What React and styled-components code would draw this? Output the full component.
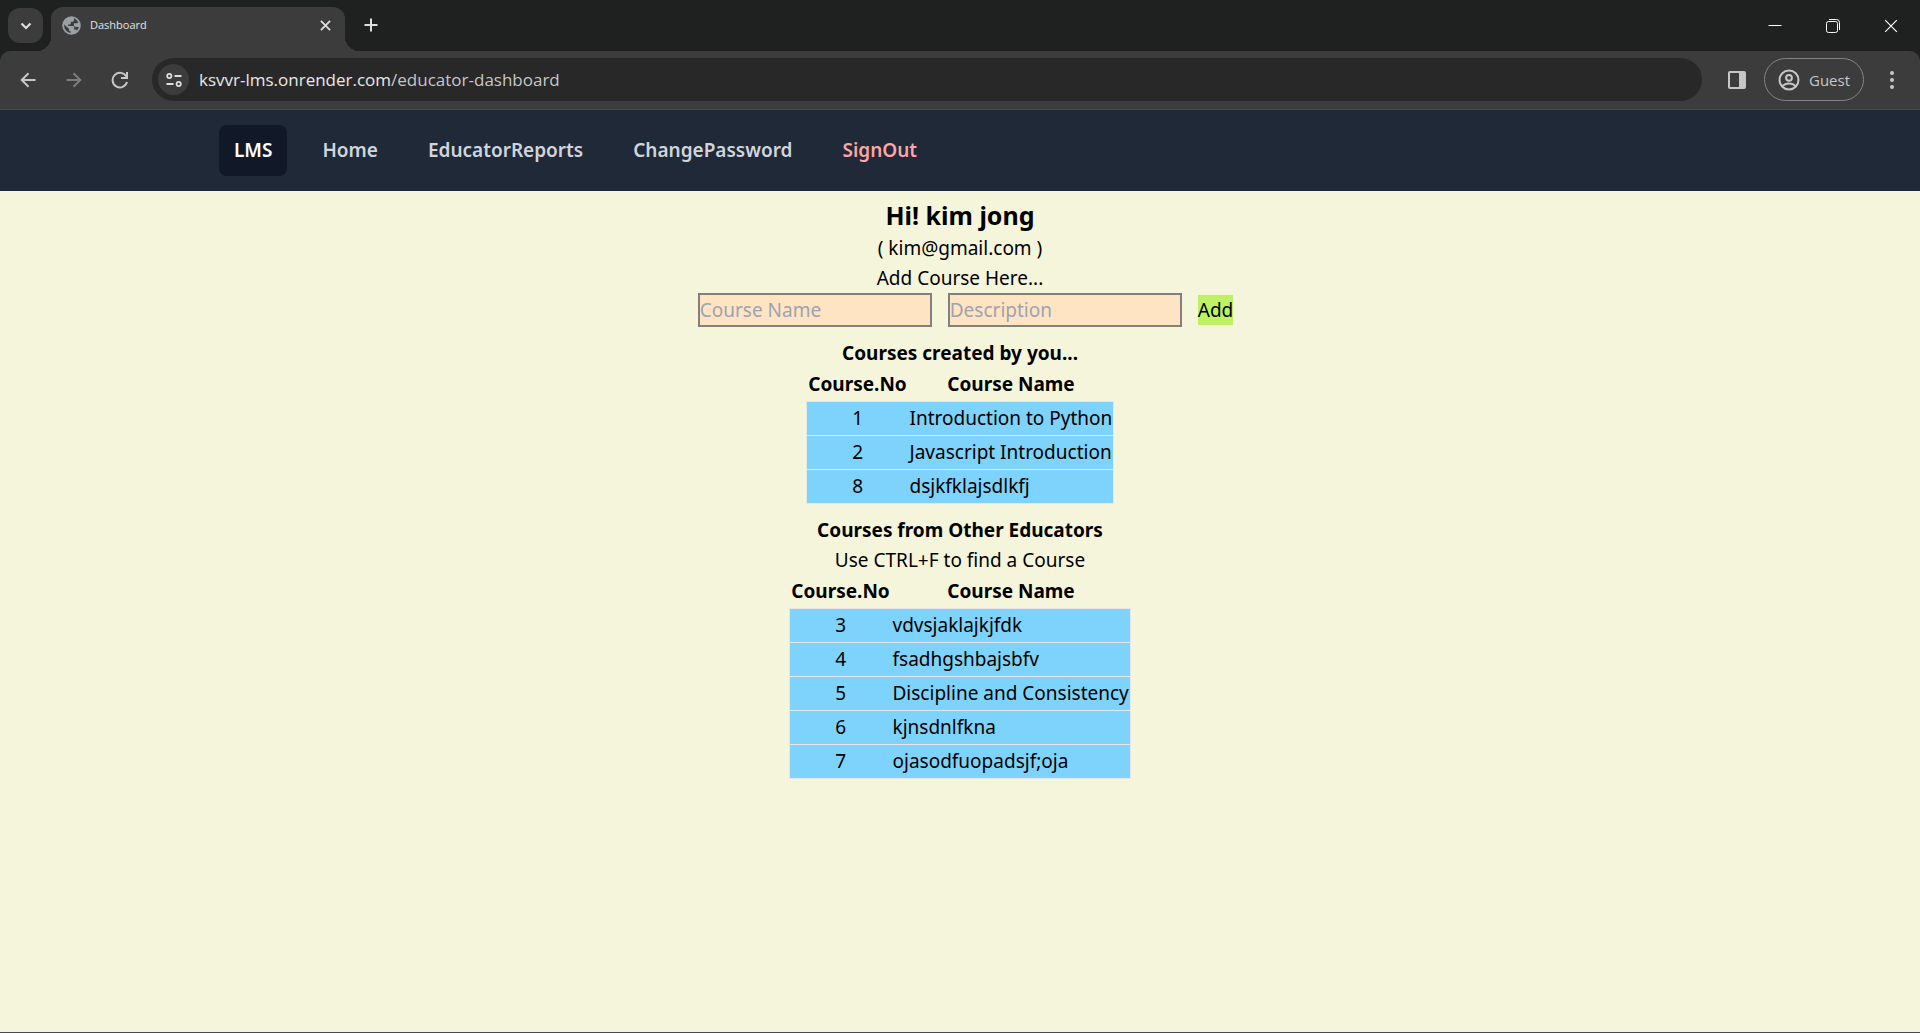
import React from "react";
import styled, { createGlobalStyle } from "styled-components";

const GlobalStyle = createGlobalStyle`
  *, *::before, *::after { box-sizing: border-box; }
  body {
    margin: 0;
    background: #f5f5dc;
    color: #000;
    font-family: "Noto Sans", "Open Sans", sans-serif;
  }
  button, input { font: inherit; color: inherit; }
  h1, h2, p, ul { margin: 0; padding: 0; }
`;

const Window = styled.div`
  display: flex;
  flex-direction: column;
  min-height: 100vh;
  border-bottom: 1px solid #474a56;
`;

/* ---------- Browser frame ---------- */

const BrowserFrame = styled.header`
  font-family: "Open Sans", "Noto Sans", sans-serif;
`;

const TabStrip = styled.div`
  display: flex;
  align-items: flex-end;
  height: 51px;
  padding-left: 8px;
  background: #1f2120;
`;

const BareButton = styled.button`
  display: flex;
  align-items: center;
  justify-content: center;
  padding: 0;
  border: 0;
  background: none;
  color: ${(p) => p.$color || "#dedede"};
`;

const TabSearch = styled(BareButton)`
  width: 35px;
  height: 35px;
  margin-bottom: 8px;
  border-radius: 12px;
  background: #3c3c3c;
`;

const Tab = styled.div`
  position: relative;
  display: flex;
  align-items: center;
  gap: 9px;
  width: 294px;
  height: 44px;
  margin-left: 8px;
  padding: 0 8px 8px 11px;
  border-radius: 12px 12px 0 0;
  background: #3c3c3c;
  color: #e3e3e3;
  font-size: 11px;
  line-height: 16px;

  &::before, &::after {
    content: "";
    position: absolute;
    bottom: 0;
    width: 14px;
    height: 14px;
  }
  &::before {
    left: -14px;
    background: radial-gradient(circle at 0 0, transparent 14px, #3c3c3c 14px);
  }
  &::after {
    right: -14px;
    background: radial-gradient(circle at 100% 0, transparent 14px, #3c3c3c 14px);
  }
`;

const TabTitle = styled.span`flex: 1;`;

const TabClose = styled(BareButton)`
  width: 24px;
  height: 24px;
`;

const NewTab = styled(BareButton)`
  width: 36px;
  height: 36px;
  margin: 0 0 8px 8px;
`;

const WindowControls = styled.div`
  display: flex;
  align-self: stretch;
  margin-left: auto;
`;

const WindowButton = styled(BareButton)`
  width: 58px;
  height: 51px;
`;

const ToolbarBack = styled.div`background: #1f2120;`;

const Toolbar = styled.div`
  display: flex;
  align-items: center;
  height: 59px;
  padding: 0 10px 1px 10px;
  border-bottom: 1px solid #4a4a4a;
  border-radius: 10px 10px 0 0;
  background: #3c3c3c;
`;

const ToolButtons = styled.div`
  display: flex;
  gap: 10px;
  margin-right: 14px;
`;

const ToolButton = styled(BareButton)`
  width: 36px;
  height: 36px;
`;

const AddressBar = styled.div`
  display: flex;
  flex: 1;
  align-items: center;
  gap: 10px;
  height: 43px;
  padding-left: 6px;
  border-radius: 22px;
  background: #282828;
`;

const SiteInfo = styled(BareButton)`
  width: 31px;
  height: 31px;
  border-radius: 50%;
  background: #3c3c3c;
`;

const Address = styled.div`
  flex: 1;
  color: #c7c7c7;
  font-size: 17px;
  line-height: 24px;
  outline: none;
`;

const Host = styled.span`color: #e8e8e8;`;

const ToolbarEnd = styled.div`
  display: flex;
  align-items: center;
  gap: 9px;
  margin-left: 17px;
`;

const GuestButton = styled(BareButton)`
  gap: 9px;
  width: 100px;
  height: 43px;
  border: 1px solid #858585;
  border-radius: 22px;
  font-size: 15px;
  line-height: 20px;
`;

const MenuButton = styled(BareButton)`
  width: 37px;
  height: 36px;
`;

/* ---------- Site ---------- */

const NavBar = styled.nav`
  padding: 15px 20px;
  background: #1f2937;
`;

const NavList = styled.ul`
  display: flex;
  gap: 20px;
  max-width: 1482px;
  margin: 0 auto;
  list-style: none;
`;

const NavLink = styled.a`
  display: block;
  padding: 10px 15px;
  border-radius: 8px;
  background: ${(p) => (p.$active ? "#111827" : "transparent")};
  color: ${(p) => p.$color || "#d1d5db"};
  font-size: 19px;
  font-weight: 600;
  line-height: 31px;
  text-decoration: none;
`;

const Main = styled.main`
  display: flex;
  flex: 1;
  flex-direction: column;
  align-items: center;
  padding-top: 7px;
  background: #f5f5dc;
`;

const Greeting = styled.h1`
  font-size: 25px;
  font-weight: 700;
  line-height: 35px;
`;

const Line = styled.p`
  font-size: 19px;
  line-height: 30px;
`;

const CourseForm = styled.form`
  display: flex;
  align-items: center;
  gap: 16px;
  padding-left: 11px;
`;

const Field = styled.input`
  width: 234px;
  height: 34px;
  padding: 0;
  border: 2px solid #808080;
  border-radius: 0;
  background: #ffe4c4;
  font-size: 19px;
  line-height: 30px;

  &::placeholder { color: #9ca3af; opacity: 1; }
`;

const AddButton = styled.button`
  padding: 0;
  border: 0;
  background: #bef264;
  font-size: 19px;
  line-height: 30px;
`;

const SectionTitle = styled.h2`
  margin-top: 11px;
  font-size: 19px;
  font-weight: 700;
  line-height: 30px;
`;

const CourseTable = styled.table`
  width: ${(p) => p.$width}px;
  border-collapse: collapse;
  font-size: 19px;
  line-height: 33px;
  white-space: nowrap;
`;

const HeadCell = styled.th`
  width: ${(p) => (p.$number ? "102px" : "auto")};
  padding: 0;
  font-weight: 700;
`;

const CourseRow = styled.tr`
  border: 1px solid #e5e7eb;
  background: #7dd3fc;
`;

const Cell = styled.td`
  padding: 0 0 0 ${(p) => (p.$number ? 0 : 1)}px;
  text-align: ${(p) => (p.$number ? "center" : "left")};
`;

/* ---------- Icons ---------- */

const Svg = ({ size = 20, box = 20, stroke = 2, children, ...rest }) => (
  <svg width={size} height={size} viewBox={`0 0 ${box} ${box}`} fill="none" stroke="currentColor" strokeWidth={stroke} aria-hidden="true" {...rest}>
    {children}
  </svg>
);

const ChevronIcon = () => <Svg size={12} box={12} stroke={2.2}><path d="M1.5 3.5 6 8l4.500-4.500" /></Svg>;
const GlobeIcon = () => (
  <Svg size={19} stroke={0}>
    <circle cx="10" cy="10" r="9.800" fill="#9aa0a6" />
    <path fill="#3c3c3c" d="M12.500 2.300v2.200c0 1-.6 1.600-1.600 1.600H9.200v1.700c0 .7-.5 1.100-1.200 1.100H6.500v1.600h5c.8 0 1.300.5 1.300 1.300v2.400h1.100c.9 0 1.500.5 1.800 1.300a7.800 7.800 0 0 0-.3-11.200c-.7-.9-1.800-1.700-2.900-2zM2.300 8.800a7.900 7.900 0 0 0 6.700 9v-1.700c-1 0-1.700-.7-1.700-1.700v-.9L2.500 9.200z" />
    <path fill="#9aa0a6" d="M12.500 7.500h3c1.200 0 1.700-.8 1.700-1.800l1.300 3.500-.5 2.300h-3.200c-1.500 0-2.300-.9-2.300-2.200z" />
  </Svg>
);
const CrossIcon = ({ size, stroke }) => <Svg size={size} box={12} stroke={stroke}><path d="m1 1 10 10M11 1 1 11" /></Svg>;
const PlusIcon = () => <Svg size={14} box={14}><path d="M7 .5v13M.5 7h13" /></Svg>;
const MinimizeIcon = () => <Svg size={14} box={14} stroke={1}><path d="M.5 6.500h13" /></Svg>;
const RestoreIcon = () => (
  <Svg size={14} box={14} stroke={1}>
    <rect x=".5" y="2.500" width="11" height="11" rx="2" />
    <path d="M3 .5h7.500a3 3 0 0 1 3 3V11" />
  </Svg>
);
const BackIcon = () => <Svg size={16} box={16}><path d="M15.500 8H2M8.500 1.200 1.700 8l6.800 6.800" /></Svg>;
const ForwardIcon = () => <Svg size={16} box={16}><path d="M.5 8H14M7.500 1.200 14.300 8l-6.800 6.800" /></Svg>;
const ReloadIcon = () => (
  <Svg size={18} box={18} stroke={2}>
    <path d="M15.300 5.500A7.300 7.300 0 1 0 16 11" />
    <path d="M16 1v6h-6" />
  </Svg>
);
const TuneIcon = () => (
  <Svg size={16} box={16} stroke={1.8}>
    <circle cx="3.300" cy="4" r="2.100" />
    <path d="M8.500 4H15.500M.5 12h7" />
    <circle cx="12.700" cy="12" r="2.100" />
  </Svg>
);
const PanelIcon = () => (
  <Svg size={20} box={20}>
    <rect x="2" y="2" width="16" height="16" rx="1" />
    <path fill="currentColor" stroke="none" d="M12 2h6v16h-6z" />
  </Svg>
);
const GuestIcon = () => (
  <Svg size={22} box={22}>
    <circle cx="11" cy="11" r="9.500" />
    <circle cx="11" cy="8.800" r="2.900" />
    <path d="M4.500 17c1.600-1.700 3.900-2.600 6.500-2.600s4.900.9 6.500 2.600" />
  </Svg>
);
const DotsIcon = () => (
  <Svg size={20} box={20} stroke={0}>
    <g fill="currentColor"><circle cx="10" cy="3" r="2" /><circle cx="10" cy="10" r="2" /><circle cx="10" cy="17" r="2" /></g>
  </Svg>
);

/* ---------- Data ---------- */

const navLinks = [
  { label: "LMS", color: "#ffffff", active: true },
  { label: "Home" },
  { label: "EducatorReports" },
  { label: "ChangePassword" },
  { label: "SignOut", color: "#fca5a5" },
];

const ownCourses = [
  [1, "Introduction to Python"],
  [2, "Javascript Introduction"],
  [8, "dsjkfklajsdlkfj"],
];

const otherCourses = [
  [3, "vdvsjaklajkjfdk"],
  [4, "fsadhgshbajsbfv"],
  [5, "Discipline and Consistency"],
  [6, "kjnsdnlfkna"],
  [7, "ojasodfuopadsjf;oja"],
];

const Courses = ({ rows, width }) => (
  <CourseTable $width={width}>
    <thead>
      <tr>
        <HeadCell scope="col" $number>Course.No</HeadCell>
        <HeadCell scope="col">Course Name</HeadCell>
      </tr>
    </thead>
    <tbody>
      {rows.map(([id, name]) => (
        <CourseRow key={id}>
          <Cell $number>{id}</Cell>
          <Cell>{name}</Cell>
        </CourseRow>
      ))}
    </tbody>
  </CourseTable>
);

export default function App() {
  return (
    <Window>
      <GlobalStyle />
      <BrowserFrame>
        <TabStrip>
          <TabSearch aria-label="Search tabs"><ChevronIcon /></TabSearch>
          <Tab>
            <GlobeIcon />
            <TabTitle>Dashboard</TabTitle>
            <TabClose aria-label="Close tab"><CrossIcon size={11} stroke={2} /></TabClose>
          </Tab>
          <NewTab aria-label="New tab"><PlusIcon /></NewTab>
          <WindowControls>
            <WindowButton aria-label="Minimize" $color="#fff"><MinimizeIcon /></WindowButton>
            <WindowButton aria-label="Restore" $color="#fff"><RestoreIcon /></WindowButton>
            <WindowButton aria-label="Close" $color="#fff"><CrossIcon size={14} stroke={1} /></WindowButton>
          </WindowControls>
        </TabStrip>
        <ToolbarBack>
          <Toolbar>
            <ToolButtons>
              <ToolButton aria-label="Back" $color="#c7c7c7"><BackIcon /></ToolButton>
              <ToolButton aria-label="Forward" $color="#7d7d7d"><ForwardIcon /></ToolButton>
              <ToolButton aria-label="Reload" $color="#c7c7c7"><ReloadIcon /></ToolButton>
            </ToolButtons>
            <AddressBar>
              <SiteInfo aria-label="Site information"><TuneIcon /></SiteInfo>
              <Address role="textbox" aria-label="Address" tabIndex={0} contentEditable suppressContentEditableWarning spellCheck={false}>
                <Host>ksvvr-lms.onrender.com</Host>/educator-dashboard
              </Address>
            </AddressBar>
            <ToolbarEnd>
              <ToolButton aria-label="Side panel" $color="#c7c7c7"><PanelIcon /></ToolButton>
              <GuestButton $color="#c7c7c7"><GuestIcon />Guest</GuestButton>
              <MenuButton aria-label="Menu" $color="#c7c7c7"><DotsIcon /></MenuButton>
            </ToolbarEnd>
          </Toolbar>
        </ToolbarBack>
      </BrowserFrame>

      <NavBar>
        <NavList>
          {navLinks.map((link) => (
            <li key={link.label}>
              <NavLink href="#" $active={link.active} $color={link.color}>{link.label}</NavLink>
            </li>
          ))}
        </NavList>
      </NavBar>

      <Main>
        <Greeting>Hi! kim jong</Greeting>
        <Line>( kim@gmail.com )</Line>
        <Line>Add Course Here...</Line>
        <CourseForm onSubmit={(e) => e.preventDefault()}>
          <Field type="text" aria-label="Course Name" placeholder="Course Name" />
          <Field type="text" aria-label="Description" placeholder="Description" />
          <AddButton type="submit">Add</AddButton>
        </CourseForm>

        <SectionTitle>Courses created by you...</SectionTitle>
        <Courses rows={ownCourses} width={308} />

        <SectionTitle>Courses from Other Educators</SectionTitle>
        <Line>Use CTRL+F to find a Course</Line>
        <Courses rows={otherCourses} width={342} />
      </Main>
    </Window>
  );
}
